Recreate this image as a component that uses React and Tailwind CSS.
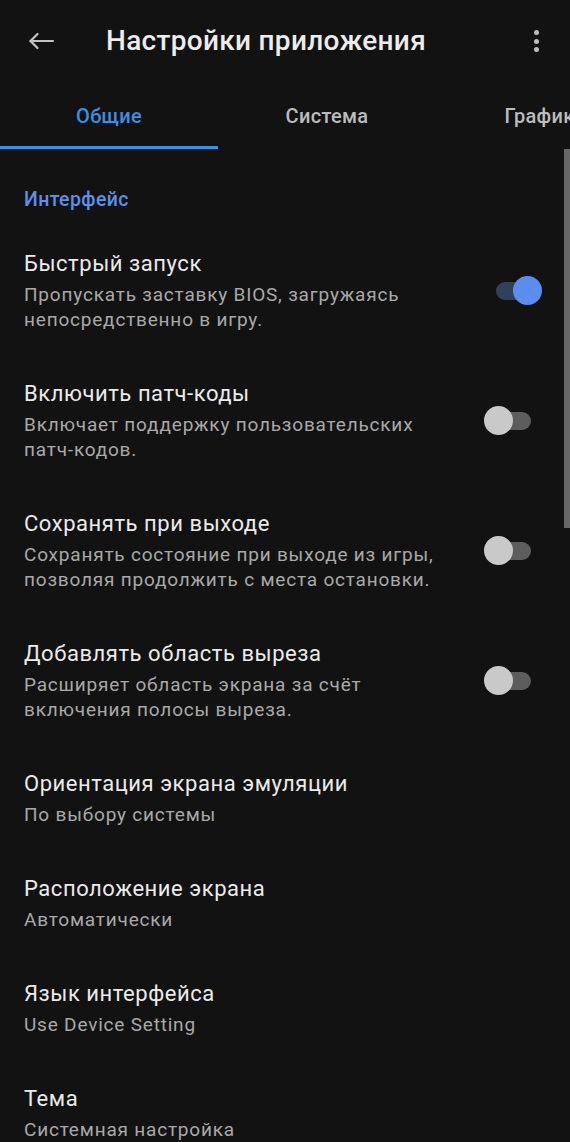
import React from "react";

const items = [
  { title: "Быстрый запуск", sub: ["Пропускать заставку BIOS, загружаясь", "непосредственно в игру."], toggle: true, on: true },
  { title: "Включить патч-коды", sub: ["Включает поддержку пользовательских", "патч-кодов."], toggle: true, on: false },
  { title: "Сохранять при выходе", sub: ["Сохранять состояние при выходе из игры,", "позволяя продолжить с места остановки."], toggle: true, on: false },
  { title: "Добавлять область выреза", sub: ["Расширяет область экрана за счёт", "включения полосы выреза."], toggle: true, on: false },
  { title: "Ориентация экрана эмуляции", sub: ["По выбору системы"] },
  { title: "Расположение экрана", sub: ["Автоматически"] },
  { title: "Язык интерфейса", sub: ["Use Device Setting"] },
  { title: "Тема", sub: ["Системная настройка"] },
];

function Toggle({ on }) {
  return (
    <div className="relative w-[51px] h-[30px] shrink-0">
      <div
        className={
          "absolute left-[6px] top-[6px] w-[35px] h-[18px] rounded-full " +
          (on ? "bg-[#33405a]" : "bg-[#5d5d5d]")
        }
      />
      {on ? (
        <div className="absolute left-[23px] top-0 w-[29px] h-[29px] rounded-full bg-[#5b8def]" />
      ) : (
        <div className="absolute left-[-6px] top-0 w-[29px] h-[29px] rounded-full bg-[#c9c9c9]" />
      )}
    </div>
  );
}

export default function App() {
  return (
    <div
      className="relative w-[570px] h-[1142px] overflow-hidden bg-[#121212]"
      style={{ fontFamily: "Roboto, 'Noto Sans', sans-serif" }}
    >
      {/* Toolbar */}
      <div className="flex items-center h-[82px]">
        <div className="w-[106px] flex items-center pl-[28px]">
          <svg width="27" height="18" viewBox="0 0 27 18" fill="none" stroke="#c4c4c4" strokeWidth="2.2" strokeLinecap="round" strokeLinejoin="round">
            <path d="M25 9H2.5" />
            <path d="M9.5 2L2.5 9L9.5 16" />
          </svg>
        </div>
        <div className="flex-1 whitespace-nowrap text-[28px] leading-[34px] font-medium tracking-[0.3px] text-[#ececec]">Настройки приложения</div>
        <div className="w-[66px] flex flex-col items-center gap-[3.5px] pr-[2px]">
          <div className="w-[5px] h-[5px] rounded-full bg-[#bdbdbd]" />
          <div className="w-[5px] h-[5px] rounded-full bg-[#bdbdbd]" />
          <div className="w-[5px] h-[5px] rounded-full bg-[#bdbdbd]" />
        </div>
      </div>

      {/* Tabs */}
      <div className="flex w-[570px] overflow-hidden">
        <div className="relative w-[218px] h-[67px] shrink-0 flex items-center justify-center text-[20px] tracking-[0.3px] font-medium text-[#3d8fe2]">
          Общие
          <div className="absolute left-0 right-0 bottom-0 h-[3px] bg-[#3b8fe3]" />
        </div>
        <div className="w-[218px] h-[67px] shrink-0 flex items-center justify-center text-[20px] tracking-[0.3px] font-medium text-[#bcbcbc]">
          Система
        </div>
        <div className="w-[218px] h-[67px] shrink-0 flex items-center justify-center text-[20px] tracking-[0.3px] font-medium text-[#bcbcbc]">
          Графика
        </div>
      </div>

      {/* Section header */}
      <div className="pl-6 pt-[39px] pb-[14px] text-[19.5px] leading-[24px] tracking-[0.4px] font-medium text-[#5f8fe6]">Интерфейс</div>

      {/* Items */}
      {items.map((it, i) => (
        <div key={i} className="flex items-center pl-6 pr-[29px] py-6">
          <div className="flex-1 min-w-0 pr-6 whitespace-nowrap">
            <div className="text-[22px] leading-[28px] tracking-[0.55px] text-[#ebebeb]">{it.title}</div>
            <div className="mt-[4px] text-[19px] leading-[25px] tracking-[0.8px] text-[#a9a9a9]">
              {it.sub.map((l, j) => (
                <div key={j}>{l}</div>
              ))}
            </div>
          </div>
          {it.toggle && <Toggle on={it.on} />}
        </div>
      ))}

      {/* Scrollbar */}
      <div className="absolute right-0 top-[149px] w-[6px] h-[379px] bg-[#686868]" />
    </div>
  );
}
